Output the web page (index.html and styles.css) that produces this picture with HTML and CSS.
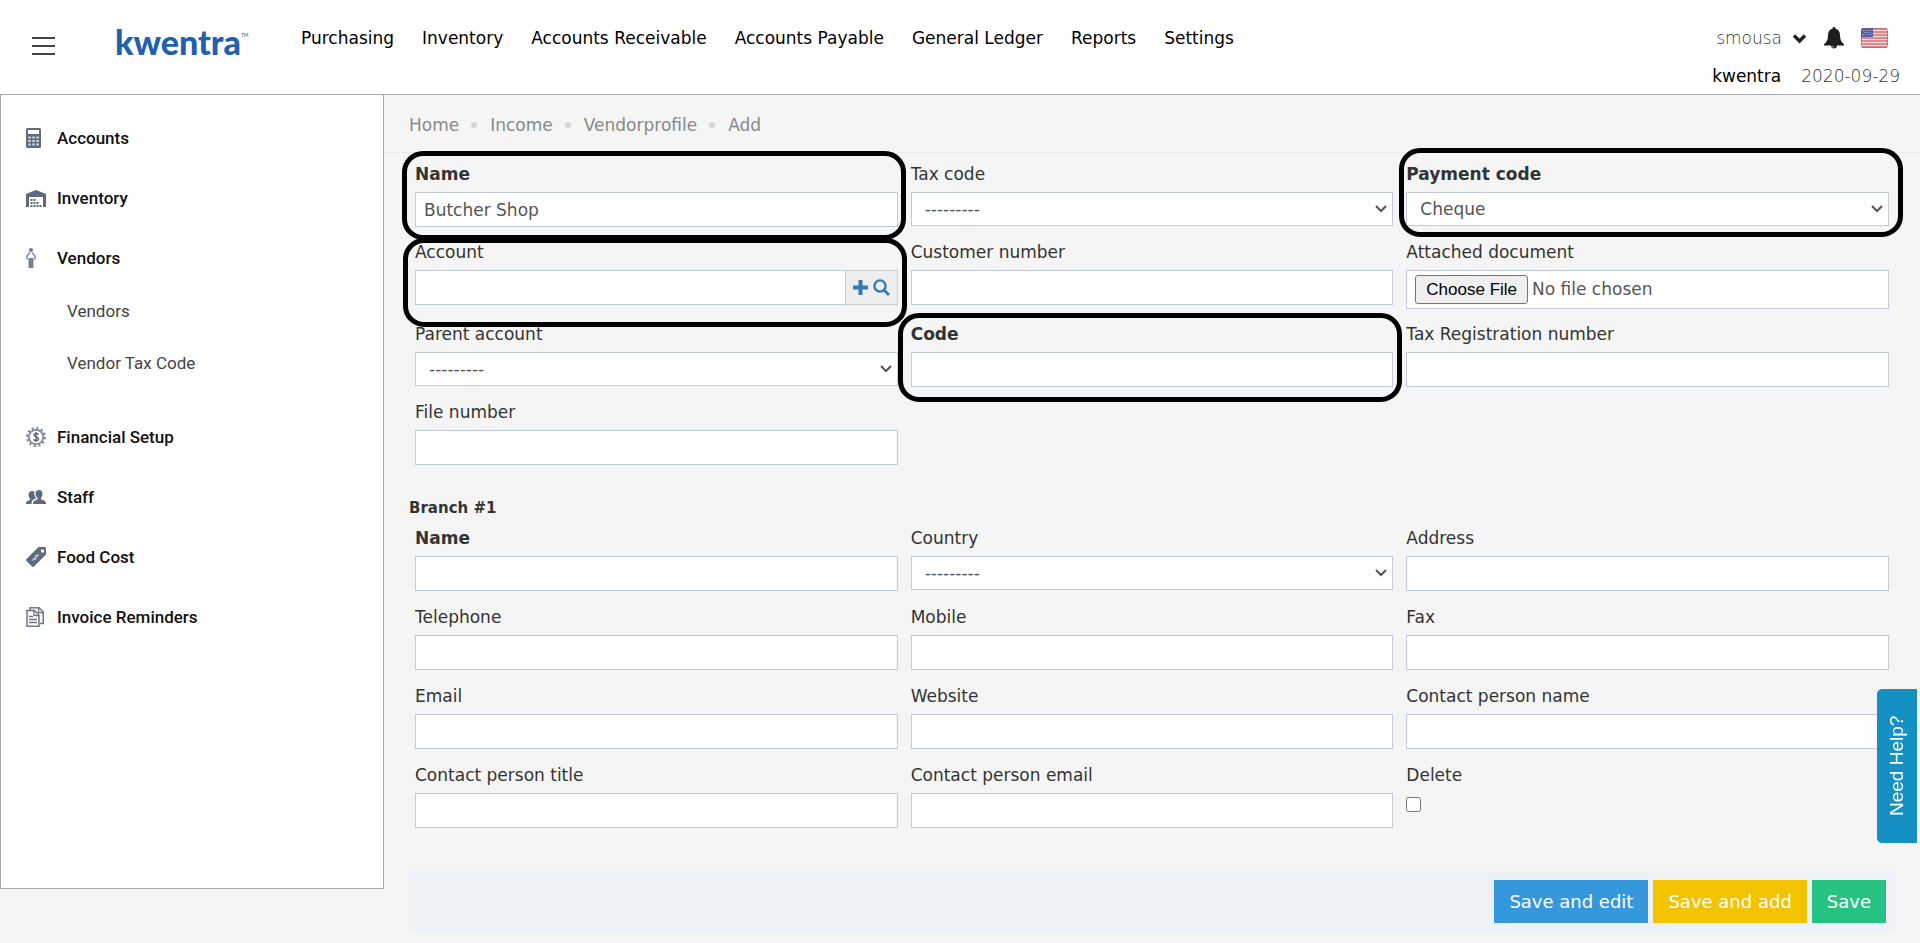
FILE: index.html
```html
<!DOCTYPE html>
<html lang="en">
<head>
    <meta charset="UTF-8">
    <meta name="viewport" content="width=device-width, initial-scale=1.0">
    <title>Add Vendorprofile | kwentra</title>
    <link rel="stylesheet" href="styles.css">
</head>
<body>

    <!-- Top bar -->
    <header class="topbar">
        <button class="menu-toggle" type="button" aria-label="Toggle menu">
            <span></span><span></span><span></span>
        </button>
        <a class="logo" href="#">kwentra<sup>TM</sup></a>
        <nav class="main-nav">
            <a href="#">Purchasing</a>
            <a href="#">Inventory</a>
            <a href="#">Accounts Receivable</a>
            <a href="#">Accounts Payable</a>
            <a href="#">General Ledger</a>
            <a href="#">Reports</a>
            <a href="#">Settings</a>
        </nav>
        <div class="user-area">
            <div class="user-row">
                <a class="user-name" href="#">smousa
                    <svg width="15" height="11" viewBox="0 0 15 11"><path d="M2 2.5l5.500 5.500L13 2.500" fill="none" stroke="#222" stroke-width="3.400"/></svg>
                </a>
                <a class="bell" href="#" aria-label="Notifications">
                    <svg width="20" height="22" viewBox="0 0 20 22"><path fill="#1d1d1d" d="M10 0c1 0 1.500.7 1.500 1.700C14.600 2.400 16 5 16 8c0 4.500 1 7 4 9.300V18.500H13c-.2 2-1.300 3-3 3s-2.800-1-3-3H0v-1.200C3 15 4 12.500 4 8c0-3 1.400-5.600 4.500-6.300C8.500.7 9 0 10 0z"/><path d="M8.200 18.800c.2 1 .8 1.400 1.800 1.500" fill="none" stroke="#fff" stroke-width=".7"/></svg>
                </a>
                <a class="flag" href="#" aria-label="English">
                    <svg width="27" height="20" viewBox="0 0 27 20">
                        <rect x="0" y="0" width="27" height="20" rx="2.500" fill="#ecd9da"/>
                        <path stroke="#d9707a" stroke-width="1.500" d="M1 1h25M0 4h27M0 7h27M0 10h27M0 13h27M0 16h27M1 19h25"/>
                        <path fill="#5560a8" d="M0 2.500Q0 0 2.500 0H12v9H0z"/>
                        <path stroke="#a9b0d8" stroke-width="1" stroke-dasharray="1 1.500" d="M2 2.500h9M3 4.500h8M2 6.500h9"/>
                        <rect x=".5" y=".5" width="26" height="19" rx="2" fill="none" stroke="#a04a5c" stroke-opacity=".5"/>
                    </svg>
                </a>
            </div>
            <div class="info-row">
                <span class="company">kwentra</span>
                <span class="date">2020-09-29</span>
            </div>
        </div>
    </header>

    <div class="page">

        <!-- Sidebar -->
        <aside class="sidebar">
            <a class="side-link" href="#">
                <svg width="20" height="20" viewBox="0 0 20 20"><rect width="15" height="20" rx="1.500" fill="#5f6b7c"/><rect x="2" y="2" width="11" height="4" fill="#fff"/><path stroke="#d5dae0" stroke-width="2" stroke-dasharray="2.500 1.500" d="M2.300 9.500h11M2.300 13h11M2.300 16.500h11"/></svg>
                Accounts
            </a>
            <a class="side-link" href="#">
                <svg width="20" height="20" viewBox="0 0 20 20"><path fill="#5f6b7c" d="M0 6l10-4 10 4v13h-3V9H3v10H0z"/><path fill="#5f6b7c" d="M4.500 11h2v2h-2zm3 0h2v2h-2zm-3 3h2v2h-2zm3 0h2v2h-2zm3 0h2v2h-2zm-6 3h2v2h-2zm3 0h2v2h-2zm3 0h2v2h-2zm3 0h2v2h-2z"/></svg>
                Inventory
            </a>
            <a class="side-link" href="#">
                <svg width="20" height="20" viewBox="0 0 20 20"><circle cx="5" cy="2" r="2" fill="#6b7888"/><path d="M4 4.500L1 8v3.500M6 4.500L9 8v3.500" fill="none" stroke="#8794a3" stroke-width="1.700"/><path fill="#75828f" d="M2.500 10h5v10h-5z"/></svg>
                Vendors
            </a>
            <div class="side-sub">
                <a href="#">Vendors</a>
                <a href="#">Vendor Tax Code</a>
            </div>
            <a class="side-link" href="#">
                <svg width="20" height="20" viewBox="0 0 20 20"><circle cx="10" cy="10" r="9" fill="none" stroke="#7e8a97" stroke-width="2" stroke-dasharray="2.300 2.412"/><circle cx="10" cy="10" r="7.200" fill="none" stroke="#7e8a97" stroke-width="1.800"/><path d="M12.500 7.500C11.500 6 8 6 8 8s4.500 1.500 4.500 3.800-4 2.200-5 .5M10 5v10" fill="none" stroke="#5f6b7c" stroke-width="1.500"/></svg>
                Financial Setup
            </a>
            <a class="side-link" href="#">
                <svg width="20" height="20" viewBox="0 0 20 20"><path fill="#5f6b7c" d="M13 3c2.300 0 3.500 1.500 3.500 4 0 1.800-.7 3-1.500 3.800v1.700c2.500.7 5 1.500 5 3.500v1H7v-1c0-2 2-2.800 4.500-3.500v-1.700C10.500 10 9.500 8.800 9.500 7c0-2.500 1.200-4 3.500-4z"/><path fill="#5f6b7c" d="M6 4c1 0 2 .4 2.500 1.200-.6 2.300 0 4 1.500 5.600v.8c-2 .7-4 1.500-4.300 3.400L5.500 17H0v-1c0-1.800 2-2.300 4-3v-1.500C3 10.500 2.500 9.500 2.500 8 2.500 5.500 4 4 6 4z"/></svg>
                Staff
            </a>
            <a class="side-link" href="#">
                <svg width="20" height="20" viewBox="0 0 20 20"><path fill="#5f6b7c" fill-rule="evenodd" d="M12.500 0H19l1 1v6.500L8 19.500q-1 1-2 0L.5 14q-1-1 0-2zM16.500 2.300a1.700 1.700 0 100 3.400 1.700 1.700 0 000-3.400z"/><path d="M12 8.500c-1.500-1-3 0-2.300 1.500s.8 3-2.700 2M6 13.500l7-6" fill="none" stroke="#c3cad1" stroke-width="1.100"/></svg>
                Food Cost
            </a>
            <a class="side-link" href="#">
                <svg width="20" height="20" viewBox="0 0 20 20"><path d="M4 3V.800h9L17.200 5v11.500H14" fill="none" stroke="#6b7785" stroke-width="1.500"/><path d="M1 3.500h7.500L13 8v11.200H1z" fill="#fff" stroke="#6b7785" stroke-width="1.500"/><path d="M8 4v4.500h5M12.500 1v4.500H17M3 9.500h4M3 12.500h8M3 15.500h8" fill="none" stroke="#6b7785" stroke-width="1.300"/></svg>
                Invoice Reminders
            </a>
        </aside>

        <!-- Content -->
        <main class="content">
            <ol class="breadcrumb">
                <li><a href="#">Home</a></li>
                <li><a href="#">Income</a></li>
                <li><a href="#">Vendorprofile</a></li>
                <li>Add</li>
            </ol>

            <form class="vendor-form">
                <div class="fields">
                    <div class="field marked mark-name">
                        <label class="required" for="name">Name</label>
                        <input class="control" type="text" id="name" value="Butcher Shop">
                    </div>
                    <div class="field">
                        <label for="tax_code">Tax code</label>
                        <select class="control" id="tax_code"><option>---------</option></select>
                    </div>
                    <div class="field marked mark-payment">
                        <label class="required" for="payment_code">Payment code</label>
                        <select class="control" id="payment_code"><option>Cheque</option></select>
                    </div>
                    <div class="field marked mark-account">
                        <label for="account">Account</label>
                        <div class="input-group">
                            <input class="control" type="text" id="account">
                            <span class="addon">
                                <a href="#" aria-label="Add account"><svg width="15" height="15" viewBox="0 0 15 15"><path fill="#337ab7" d="M5.500 0h4v5.500H15v4H9.500V15h-4V9.500H0v-4h5.500z"/></svg></a>
                                <a href="#" aria-label="Search account"><svg width="17" height="17" viewBox="0 0 17 17"><circle cx="7" cy="7" r="5.600" fill="none" stroke="#337ab7" stroke-width="2.400"/><path d="M11 11l5 5" stroke="#337ab7" stroke-width="2.800"/></svg></a>
                            </span>
                        </div>
                    </div>
                    <div class="field">
                        <label for="customer_number">Customer number</label>
                        <input class="control" type="text" id="customer_number">
                    </div>
                    <div class="field">
                        <label for="document">Attached document</label>
                        <input class="control file" type="file" id="document">
                    </div>
                    <div class="field">
                        <label for="parent_account">Parent account</label>
                        <select class="control" id="parent_account"><option>---------</option></select>
                    </div>
                    <div class="field marked mark-code">
                        <label class="required" for="code">Code</label>
                        <input class="control" type="text" id="code">
                    </div>
                    <div class="field">
                        <label for="tax_number">Tax Registration number</label>
                        <input class="control" type="text" id="tax_number">
                    </div>
                    <div class="field">
                        <label for="file_number">File number</label>
                        <input class="control" type="text" id="file_number">
                    </div>
                </div>

                <h4 class="branch-title">Branch #1</h4>
                <div class="fields branch">
                    <div class="field">
                        <label class="required" for="branch_name">Name</label>
                        <input class="control" type="text" id="branch_name">
                    </div>
                    <div class="field">
                        <label for="country">Country</label>
                        <select class="control" id="country"><option>---------</option></select>
                    </div>
                    <div class="field">
                        <label for="address">Address</label>
                        <input class="control" type="text" id="address">
                    </div>
                    <div class="field">
                        <label for="telephone">Telephone</label>
                        <input class="control" type="text" id="telephone">
                    </div>
                    <div class="field">
                        <label for="mobile">Mobile</label>
                        <input class="control" type="text" id="mobile">
                    </div>
                    <div class="field">
                        <label for="fax">Fax</label>
                        <input class="control" type="text" id="fax">
                    </div>
                    <div class="field">
                        <label for="email">Email</label>
                        <input class="control" type="text" id="email">
                    </div>
                    <div class="field">
                        <label for="website">Website</label>
                        <input class="control" type="text" id="website">
                    </div>
                    <div class="field">
                        <label for="contact_name">Contact person name</label>
                        <input class="control" type="text" id="contact_name">
                    </div>
                    <div class="field">
                        <label for="contact_title">Contact person title</label>
                        <input class="control" type="text" id="contact_title">
                    </div>
                    <div class="field">
                        <label for="contact_email">Contact person email</label>
                        <input class="control" type="text" id="contact_email">
                    </div>
                    <div class="field">
                        <label for="delete">Delete</label>
                        <input class="check" type="checkbox" id="delete">
                    </div>
                </div>

                <div class="actions">
                    <button class="btn btn-blue" type="button">Save and edit</button>
                    <button class="btn btn-yellow" type="button">Save and add</button>
                    <button class="btn btn-green" type="button">Save</button>
                </div>
            </form>
        </main>
    </div>

    <button class="help-tab" type="button">Need Help?</button>

</body>
</html>
```
FILE: styles.css
```css
/* General Styles */
*,
*::after {
    box-sizing: border-box;
}

body {
    margin: 0;
    background-color: #f5f5f5;
    color: #333;
    font-family: "DejaVu Sans", Verdana, sans-serif;
    font-size: 17px;
    line-height: 20px;
}

a {
    color: inherit;
    text-decoration: none;
}

svg {
    display: block;
}

/* Top Bar */
.topbar {
    display: flex;
    align-items: flex-start;
    height: 95px;
    padding: 0 20px 0 32px;
    background-color: #fff;
    border-bottom: 1px solid #aaa;
}

.menu-toggle {
    display: flex;
    flex-direction: column;
    gap: 6px;
    margin-top: 37px;
    padding: 0;
    border: 0;
    background: none;
    cursor: pointer;
}

.menu-toggle span {
    width: 23px;
    height: 2px;
    background-color: #444;
}

.logo {
    width: 186px;
    margin-top: 23px;
    padding-left: 60px;
    color: #2260ae;
    font-family: Lato, sans-serif;
    font-size: 34px;
    font-weight: 900;
    line-height: 38px;
    white-space: nowrap;
}

.logo sup {
    font-size: 5px;
    font-weight: 400;
    line-height: 5px;
    vertical-align: 18px;
}

.main-nav {
    display: flex;
    flex: 1;
    gap: 28px;
    margin-top: 28px;
    padding-left: 60px;
    color: #000;
    white-space: nowrap;
}

.user-area {
    display: flex;
    flex-direction: column;
    gap: 18px;
    margin-top: 28px;
}

.user-row {
    display: flex;
    align-items: center;
    justify-content: flex-end;
    gap: 17px;
    height: 20px;
    padding-right: 12px;
}

.user-name {
    display: flex;
    align-items: center;
    gap: 10px;
    font-weight: 200;
}

.info-row {
    display: flex;
    justify-content: flex-end;
    gap: 20px;
}

.company {
    color: #000;
}

.date {
    font-weight: 200;
}

/* Page Layout */
.page {
    display: flex;
    align-items: flex-start;
}

/* Sidebar */
.sidebar {
    flex: 0 0 384px;
    min-height: 795px;
    margin-top: -1px;
    padding: 13px 25px;
    background-color: #fff;
    border: 1px solid #aaa;
    font-family: Roboto, sans-serif;
    font-size: 17px;
}

.side-link {
    display: flex;
    align-items: center;
    gap: 11px;
    height: 60px;
    color: #111;
    font-weight: 500;
}

.side-sub {
    padding: 0 0 15px 41px;
    color: #444;
}

.side-sub a {
    display: block;
    padding: 13px 0 19px;
}

/* Breadcrumb */
.content {
    flex: 1;
    min-width: 0;
}

.breadcrumb {
    display: flex;
    height: 58px;
    margin: 0;
    padding: 20px 25px 0;
    border-bottom: 1px solid #e7ecf1;
    color: #888;
    list-style: none;
}

.breadcrumb li {
    display: flex;
    align-items: center;
    height: 20px;
}

.breadcrumb li + li::before {
    content: "";
    width: 6px;
    height: 6px;
    margin: 0 13px 0 12px;
    border-radius: 50%;
    background-color: #d3d6da;
}

/* Form */
.vendor-form {
    padding: 11px 25px 12px;
}

.fields {
    display: grid;
    grid-template-columns: repeat(3, 1fr);
    gap: 15px 13px;
    padding: 0 6px;
}

.fields.branch {
    row-gap: 16px;
}

.field {
    position: relative;
    min-width: 0;
}

.field label {
    display: block;
    margin-bottom: 8px;
}

.field .required {
    font-weight: bold;
}

.control {
    display: block;
    width: 100%;
    height: 35px;
    padding: 0 8px;
    border: 1px solid #c2cad8;
    border-radius: 0;
    background-color: #fff;
    color: #555;
    font-family: inherit;
    font-size: 17px;
}

select.control {
    height: 34px;
    padding: 0 25px 0 13px;
    background-image: url("data:image/svg+xml,%3Csvg xmlns='http://www.w3.org/2000/svg' width='12' height='8'%3E%3Cpath d='M1 1l5 5 5-5' fill='none' stroke='%23555' stroke-width='2'/%3E%3C/svg%3E");
    background-position: right 5px center;
    background-repeat: no-repeat;
    appearance: none;
}

.control.file {
    height: 39px;
    padding: 4px 8px;
}

.control.file::file-selector-button {
    height: 29px;
    padding: 0 10px;
    border: 1px solid #767676;
    border-radius: 3px;
    background-color: #efefef;
    color: #000;
    font-family: "Liberation Sans", Arial, sans-serif;
    font-size: 17px;
}

.check {
    display: block;
    width: 15px;
    height: 15px;
    margin: 12px 0 0;
}

.input-group {
    display: flex;
}

.addon {
    display: flex;
    flex: 0 0 52px;
    align-items: center;
    justify-content: center;
    gap: 5px;
    border: 1px solid #ccc;
    border-left: 0;
    background-color: #eee;
}

.marked::after {
    content: "";
    position: absolute;
    top: -13px;
    right: -8px;
    left: -13px;
    z-index: 1;
    height: 89px;
    border: 5px solid #000;
    border-radius: 21px;
    pointer-events: none;
}

.mark-account::after {
    top: -4px;
    right: -9px;
    left: -12px;
}

.mark-code::after {
    top: -11px;
    right: -9px;
}

.mark-payment::after {
    top: -16px;
    right: -14px;
    left: -7px;
}

.branch-title {
    margin: 33px 0 10px;
    font-size: 15px;
    font-weight: bold;
    line-height: 20px;
}

/* Actions */
.actions {
    display: flex;
    justify-content: flex-end;
    gap: 5px;
    margin-top: 43px;
    padding: 9px;
    background-color: #eef1f6;
}

.btn {
    height: 43px;
    padding: 0 15px;
    border: 0;
    color: #fff;
    font-family: inherit;
    font-size: 18px;
    cursor: pointer;
}

.btn-blue {
    background-color: #3598dc;
}

.btn-yellow {
    background-color: #f4c300;
}

.btn-green {
    background-color: #26c281;
}

/* Help Tab */
.help-tab {
    position: fixed;
    right: 3px;
    bottom: 100px;
    z-index: 2;
    width: 40px;
    height: 154px;
    padding: 0;
    border: 0;
    border-radius: 0 5px 5px 0;
    background-color: #1590c2;
    color: #fff;
    font-family: "Liberation Sans", Arial, sans-serif;
    font-size: 19px;
    writing-mode: vertical-rl;
    transform: rotate(180deg);
    cursor: pointer;
}
```
